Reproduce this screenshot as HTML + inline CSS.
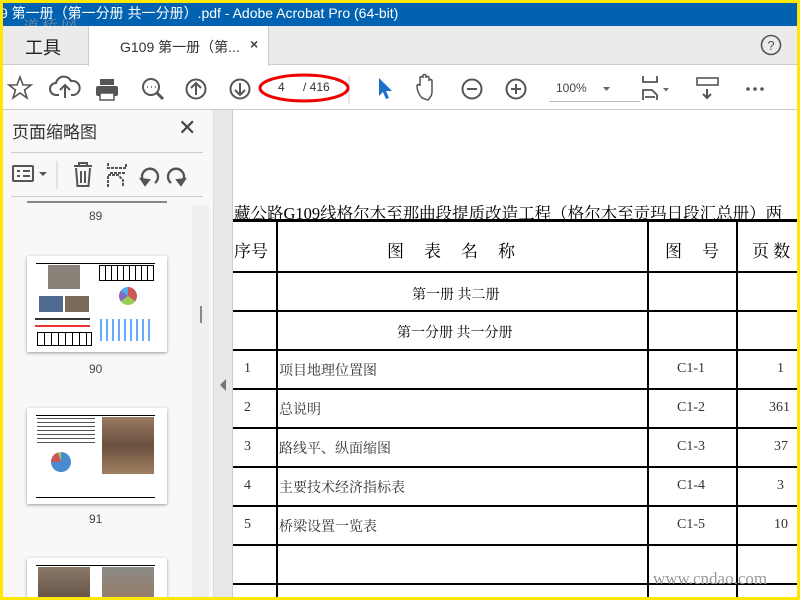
<!DOCTYPE html><html><head><meta charset="utf-8"><style>
*{margin:0;padding:0;box-sizing:border-box}
body{width:800px;height:600px;overflow:hidden;background:#ffe800;font-family:"Liberation Sans","Noto Sans CJK SC",sans-serif;position:relative}
.a{position:absolute}
svg{position:absolute}
.ser{font-family:"Liberation Serif","Noto Serif CJK SC",serif}
.hl{position:absolute;height:2px;background:#000}
.vl{position:absolute;width:2px;background:#000}
.nw{white-space:nowrap}
</style></head><body>
<div class="a" style="left:3px;top:3px;width:794px;height:594px;background:#fff;overflow:hidden">
<div class="a" style="top:0;width:797px;height:23px;background:#0062b1;color:#fff;font-size:14px;line-height:21px;white-space:nowrap;left:-3px">9 第一册（第一分册 共一分册）.pdf - Adobe Acrobat Pro (64-bit)</div>
<div class="a" style="left:20px;top:11px;color:rgba(150,150,150,.8);font-size:16px;font-family:'Noto Serif CJK SC',serif;letter-spacing:3px">道桥网</div>
<div class="a" style="left:0;top:23px;width:794px;height:39px;background:#ebebeb;border-bottom:1px solid #ccc"></div>
<div class="a" style="left:22px;top:31px;font-size:18px;color:#222">工具</div>
<div class="a" style="left:85px;top:23px;width:181px;height:40px;background:#fff;border-left:1px solid #ccc;border-right:1px solid #ccc"></div>
<div class="a" style="left:117px;top:34px;font-size:14px;color:#333">G109 第一册（第...</div>
<div class="a" style="left:247px;top:33px;font-size:14px;color:#444;font-weight:bold">×</div>
<svg style="left:757px;top:31px" width="22" height="22"><circle cx="11" cy="11" r="9.5" fill="none" stroke="#555" stroke-width="1.6"/><text x="11" y="16" font-size="13" text-anchor="middle" fill="#555" font-family="Liberation Sans">?</text></svg>
<div class="a" style="left:0;top:106px;width:794px;height:1px;background:#ccc"></div>
<svg style="left:0;top:62px" width="794" height="44" fill="none" stroke="#555" stroke-width="2">
<path d="M17 12 l3 8 h8 l-6.5 5 l2.5 8 l-7-5 l-7 5 l2.5-8 l-6.5-5 h8z" stroke-width="1.6"/>
<path d="M56 30 h-3 a6 6 0 0 1 0-12 a8 8 0 0 1 15-2 a6 6 0 0 1 3 14 h-3 M62 33 v-12 M57 25 l5-5 l5 5"/>
<rect x="93" y="21" width="22" height="10" rx="2" fill="#555" stroke="none"/><rect x="97" y="14" width="14" height="6" fill="#555" stroke="none"/><rect x="97" y="28" width="14" height="7" fill="#fff" stroke="#555" stroke-width="1.5"/>
<circle cx="148" cy="22" r="8"/><path d="M154 28 l6 6" stroke-width="3"/><path d="M144 22h1M148 22h1M152 22h1" stroke-width="1.5"/>
<circle cx="193" cy="24" r="9.5"/><path d="M193 30v-11M188 23l5-5 5 5"/>
<circle cx="237" cy="24" r="9.5"/><path d="M237 18v11M232 25l5 5 5-5"/>
<path d="M346 11v28" stroke="#ccc" stroke-width="1"/>
<path d="M376 13 v18 l4-4 3 7 3-1-3-7 h6z" fill="#1d6fc8" stroke="none"/>
<path d="M419 33 c-3-3-5-8-5-12 c0-2 3-2 3 0 v-8 c0-2 3-2 3 0 v-2 c0-2 3-2 3 0 v2 c0-2 3-2 3 0 v3 c0-2 3-2 3 0 v11 c0 3-2 6-4 8z" stroke-width="1.5"/>
<circle cx="469" cy="24" r="9.5"/><path d="M464 24h10"/>
<circle cx="513" cy="24" r="9.5"/><path d="M508 24h10M513 19v10"/>
<path d="M546 36.5h91" stroke="#bbb" stroke-width="1"/>
<path d="M600 22l3.5 4 3.5-4z" fill="#666" stroke="none"/>
<path d="M640 11v6h14v-6M640 35v-10h9l5 5v5M642 32h10" stroke-width="1.8"/><path d="M660 23l3 3.5 3-3.5z" fill="#666" stroke="none"/>
<rect x="694" y="13" width="21" height="7" stroke-width="1.6"/><path d="M704 24v9M700 29l4 4 4-4" />
<circle cx="745" cy="24" r="1.8" fill="#555" stroke="none"/><circle cx="752" cy="24" r="1.8" fill="#555" stroke="none"/><circle cx="759" cy="24" r="1.8" fill="#555" stroke="none"/>
</svg>
<div class="a" style="left:275px;top:77px;font-size:12px;color:#333">4</div>
<div class="a" style="left:300px;top:77px;font-size:12px;color:#333">/ 416</div>
<div class="a" style="left:553px;top:78px;font-size:12px;color:#444">100%</div>
<svg style="left:254px;top:69px" width="94" height="32"><ellipse cx="47" cy="16" rx="44" ry="13" fill="none" stroke="#e00" stroke-width="3"/></svg>
<div class="a" style="left:0;top:107px;width:211px;height:490px;background:#f8f8f8;border-right:1px solid #ddd"></div>
<div class="a" style="left:9px;top:115px;font-size:17px;color:#333">页面缩略图</div>
<div class="a" style="left:175px;top:112px;font-size:22px;color:#444">✕</div>
<div class="a" style="left:8px;top:149px;width:192px;height:1px;background:#ccc"></div>
<div class="a" style="left:8px;top:193px;width:192px;height:1px;background:#ccc"></div>
<svg style="left:0;top:150px" width="210" height="43" fill="none" stroke="#555" stroke-width="2">
<rect x="10" y="13" width="20" height="15" rx="1"/><path d="M14 18h3M14 23h3M20 18h7M20 23h7"/><path d="M36 19l4 4 4-4z" fill="#555" stroke="none"/>
<path d="M54 8v28" stroke="#ccc" stroke-width="1"/>
<path d="M71 13h18M76 13v-3h8v3M73 15l1.5 18h11l1.5-18M78 18v12M82 18v12"/>
<path d="M105 10v5h18v-5M105 34v-12h10l5 5v7M107 20h16" stroke-dasharray="3 1"/>
<path d="M142 30 a8 8 0 1 1 10 0" stroke-width="2.4"/><path d="M138 26l4 6 4-5z" fill="#555"/>
<path d="M178 30 a8 8 0 1 0 -10 0" stroke-width="2.4"/><path d="M182 26l-4 6-4-5z" fill="#555"/>
</svg>
<div class="a" style="left:189px;top:202px;width:17px;height:395px;background:#efefef"></div>
<div class="a" style="left:197px;top:303px;width:2px;height:17px;background:#888"></div>
<div class="a" style="left:24px;top:198px;width:140px;height:2px;background:#888"></div>
<div class="a" style="left:86px;top:206px;font-size:12px;color:#444">89</div>
<div class="a" style="left:24px;top:253px;width:140px;height:96px;background:#fff;box-shadow:0 1px 3px #999">
<div class="a" style="left:9px;top:7px;width:119px;height:1px;background:#000"></div>
<div class="a" style="left:21px;top:9px;width:32px;height:24px;background:#8a8178"></div>
<div class="a" style="left:72px;top:9px;width:55px;height:16px;border:1px solid #000;background:repeating-linear-gradient(90deg,#fff 0 5px,#000 5px 6px)"></div>
<div class="a" style="left:92px;top:31px;width:18px;height:18px;border-radius:50%;background:conic-gradient(#c55 0 35%,#9c5 35% 65%,#86b 65% 85%,#5ae 85%)"></div>
<div class="a" style="left:12px;top:40px;width:24px;height:16px;background:#506a90"></div>
<div class="a" style="left:38px;top:40px;width:24px;height:16px;background:#7a6a5a"></div>
<div class="a" style="left:73px;top:63px;width:52px;height:22px;background:repeating-linear-gradient(90deg,#6af 0 2px,#fff 2px 6px)"></div>
<div class="a" style="left:8px;top:62px;width:55px;height:2px;background:#333"></div>
<div class="a" style="left:8px;top:69px;width:55px;height:2px;background:#e33"></div>
<div class="a" style="left:10px;top:76px;width:55px;height:14px;border:1px solid #000;background:repeating-linear-gradient(90deg,#fff 0 6px,#000 6px 7px)"></div>
</div>
<div class="a" style="left:86px;top:359px;font-size:12px;color:#444">90</div>
<div class="a" style="left:24px;top:405px;width:140px;height:96px;background:#fff;box-shadow:0 1px 3px #999">
<div class="a" style="left:9px;top:7px;width:119px;height:1px;background:#000"></div>
<div class="a" style="left:10px;top:10px;width:58px;height:25px;background:repeating-linear-gradient(180deg,#555 0 1px,#fff 1px 4px)"></div>
<div class="a" style="left:75px;top:9px;width:52px;height:57px;background:linear-gradient(#9a7a60,#6a5040,#a08060)"></div>
<div class="a" style="left:24px;top:44px;width:20px;height:20px;border-radius:50%;background:conic-gradient(#4a8ad0 0 75%,#c55 75% 95%,#9c5 95%)"></div>
<div class="a" style="left:9px;top:89px;width:119px;height:1px;background:#000"></div>
</div>
<div class="a" style="left:86px;top:509px;font-size:12px;color:#444">91</div>
<div class="a" style="left:24px;top:555px;width:140px;height:50px;background:#fff;box-shadow:0 1px 3px #999">
<div class="a" style="left:9px;top:7px;width:119px;height:1px;background:#000"></div>
<div class="a" style="left:11px;top:9px;width:52px;height:40px;background:linear-gradient(#8a7868,#5a4a40)"></div>
<div class="a" style="left:75px;top:9px;width:52px;height:40px;background:linear-gradient(#8a8a88,#9a7a60)"></div>
</div>
<div class="a" style="left:211px;top:107px;width:19px;height:490px;background:#e8e8e8;border-right:1px solid #ccc"></div>
<svg style="left:217px;top:376px" width="8" height="12"><path d="M6 0v12L0 6z" fill="#777"/></svg>
<div class="a ser nw" style="left:231px;top:197px;font-size:16.5px;color:#000">藏公路G109线格尔木至那曲段提质改造工程（格尔木至贡玛日段汇总册）两</div>
<div class="a" style="left:230px;top:216px;width:564px;height:3px;background:#000"></div>
<div class="hl" style="left:230px;top:268px;width:564px"></div>
<div class="hl" style="left:230px;top:307px;width:564px"></div>
<div class="hl" style="left:230px;top:346px;width:564px"></div>
<div class="hl" style="left:230px;top:385px;width:564px"></div>
<div class="hl" style="left:230px;top:424px;width:564px"></div>
<div class="hl" style="left:230px;top:463px;width:564px"></div>
<div class="hl" style="left:230px;top:502px;width:564px"></div>
<div class="hl" style="left:230px;top:541px;width:564px"></div>
<div class="hl" style="left:230px;top:580px;width:564px"></div>
<div class="vl" style="left:273px;top:219px;height:380px"></div>
<div class="vl" style="left:644px;top:219px;height:380px"></div>
<div class="vl" style="left:733px;top:219px;height:380px"></div>
<div class="a ser nw" style="left:231px;top:234px;font-size:17px">序号</div>
<div class="a ser nw" style="left:384px;top:234px;font-size:17px;letter-spacing:20px">图表名称</div>
<div class="a ser nw" style="left:662px;top:234px;font-size:17px;letter-spacing:20px">图号</div>
<div class="a ser nw" style="left:749px;top:234px;font-size:17px">页 数</div>
<div class="a ser nw" style="left:409px;top:281px;font-size:14px">第一册 共二册</div>
<div class="a ser nw" style="left:394px;top:319px;font-size:14px">第一分册 共一分册</div>
<div class="a ser nw" style="left:0;top:0;font-size:14px;color:#333">
<div class="a nw" style="left:241px;top:358px">1</div><div class="a nw" style="left:276px;top:357px">项目地理位置图</div><div class="a nw" style="left:674px;top:358px">C1-1</div><div class="a nw" style="left:774px;top:358px">1</div>
<div class="a nw" style="left:241px;top:397px">2</div><div class="a nw" style="left:276px;top:396px">总说明</div><div class="a nw" style="left:674px;top:397px">C1-2</div><div class="a nw" style="left:766px;top:397px">361</div>
<div class="a nw" style="left:241px;top:436px">3</div><div class="a nw" style="left:276px;top:435px">路线平、纵面缩图</div><div class="a nw" style="left:674px;top:436px">C1-3</div><div class="a nw" style="left:771px;top:436px">37</div>
<div class="a nw" style="left:241px;top:475px">4</div><div class="a nw" style="left:276px;top:474px">主要技术经济指标表</div><div class="a nw" style="left:674px;top:475px">C1-4</div><div class="a nw" style="left:774px;top:475px">3</div>
<div class="a nw" style="left:241px;top:514px">5</div><div class="a nw" style="left:276px;top:513px">桥梁设置一览表</div><div class="a nw" style="left:674px;top:514px">C1-5</div><div class="a nw" style="left:771px;top:514px">10</div>
</div>
<div class="a ser nw" style="left:650px;top:566px;font-size:17px;color:#999">www.cndao.com</div>
</div>
</body></html>
